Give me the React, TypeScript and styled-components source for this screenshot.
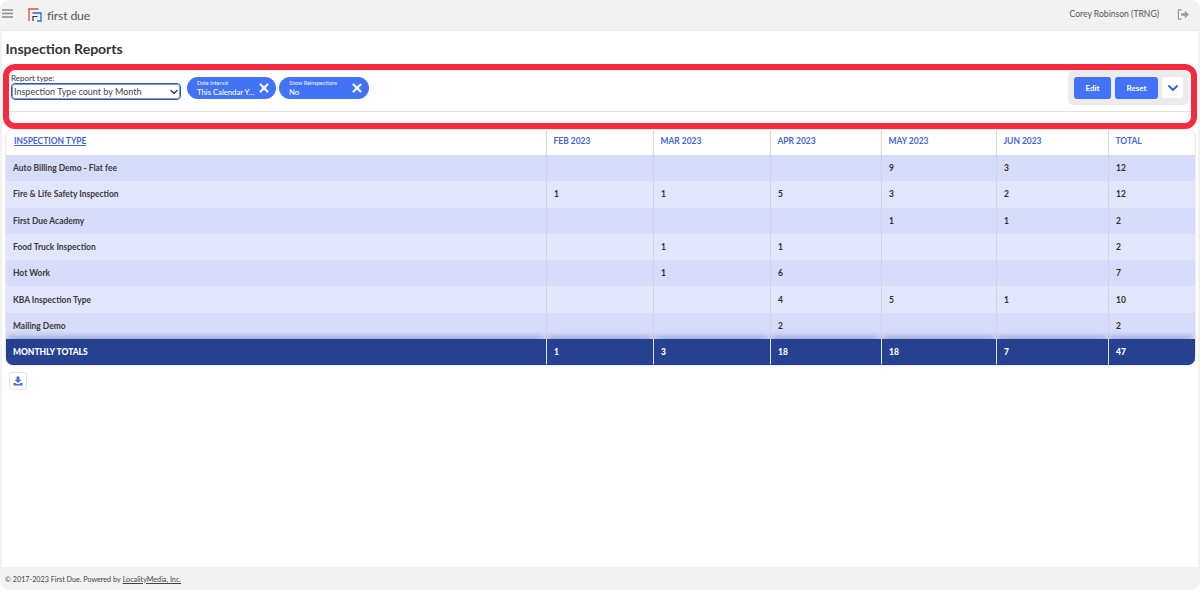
import React from 'react';
import styled, { createGlobalStyle } from 'styled-components';
import { ChevronDown, X } from 'lucide-react';

const GlobalStyle = createGlobalStyle`
  html, body {
    margin: 0;
    padding: 0;
    background: #fff;
    font-family: Lato, 'Liberation Sans', sans-serif;
    color: #333;
  }
`;
const Page = styled.div`
  position: relative;
  width: 1200px;
  height: 590px;
  box-sizing: border-box;
  display: flex;
  flex-direction: column;
  background: #f2f2f2;
  border-radius: 9px;
  padding: 0 2px;
  overflow: hidden;
`;
const TopBar = styled.div`
  height: 31px;
  flex: none;
  display: flex;
  align-items: center;
  padding: 0 9px 0 0;
  border-bottom: 1px solid #e8e8e8;
  box-sizing: border-box;
`;
const MenuIcon = styled.svg`
  width: 11px;
  height: 9px;
  margin-bottom: 3px;
`;
const Logo = styled.svg`
  width: 14px;
  height: 14px;
  margin-left: 15px;
`;
const Brand = styled.span`
  font-size: 12.3px;
  color: #555;
  margin-left: 5px;
  letter-spacing: -0.2px;
`;
const UserName = styled.span`
  margin-left: auto;
  font-size: 8.6px;
  color: #555;
  margin-right: 18px;
  margin-bottom: 2px;
`;
const LogoutIcon = styled.svg`
  width: 12px;
  height: 11px;
  margin-bottom: 2px;
`;
const Main = styled.div`
  flex: 1;
  background: #fff;
  padding: 0 3px 0 4px;
  display: flex;
  flex-direction: column;
`;
const Title = styled.h1`
  margin: 9px 0 0 -0.5px;
  height: 27px;
  font-size: 14px;
  line-height: 17px;
  font-weight: 700;
  color: #333;
`;
const FilterPanel = styled.div`
  height: 45px;
  box-sizing: border-box;
  display: flex;
  align-items: flex-start;
  padding: 7px 6px 0 5px;
  border-bottom: 1px solid #e2e2e2;
  margin-bottom: 18px;
`;
const ReportField = styled.div`
  width: 170px;
  display: flex;
  flex-direction: column;
`;
const FieldLabel = styled.label`
  font-size: 8px;
  line-height: 9px;
  color: #333;
`;
const FakeSelect = styled.div`
  height: 17px;
  box-sizing: border-box;
  display: flex;
  align-items: center;
  justify-content: space-between;
  border: 1px solid #2f55a4;
  outline: 1px solid #7e9fd8;
  outline-offset: -2px;
  border-radius: 4px;
  padding: 0 0 0 2px;
  font-size: 9px;
  color: #444;
  background: #fff;
`;
const Chips = styled.div`
  display: flex;
  gap: 3px;
  margin-left: 6px;
  margin-top: 3px;
`;
const Chip = styled.div<{ $width: number }>`
  width: ${(p) => p.$width}px;
  height: 22px;
  box-sizing: border-box;
  border-radius: 11px;
  background: #4272f5;
  color: #fff;
  padding: 0 5px 0 10px;
  display: flex;
  align-items: center;
  justify-content: space-between;
`;
const ChipText = styled.div`
  display: flex;
  flex-direction: column;
`;
const ChipLabel = styled.span`
  font-size: 5.5px;
  line-height: 7px;
  opacity: 0.95;
`;
const ChipValue = styled.span`
  font-size: 7.7px;
  line-height: 10px;
  font-weight: 500;
`;
const ActionGroup = styled.div`
  margin-left: auto;
  margin-top: -3px;
  height: 34px;
  box-sizing: border-box;
  background: #ececec;
  border-radius: 5px;
  padding: 6px;
  display: flex;
  gap: 4px;
`;
const ActionButton = styled.div<{ $width: number }>`
  width: ${(p) => p.$width}px;
  height: 22px;
  border-radius: 3px;
  background: #4272f5;
  color: #fff;
  font-size: 8px;
  font-weight: 700;
  display: flex;
  align-items: center;
  justify-content: center;
`;
const ToggleButton = styled.div`
  width: 21px;
  height: 21px;
  border-radius: 3px;
  background: #fff;
  color: #2f62e8;
  display: flex;
  align-items: center;
  justify-content: center;
`;
const Report = styled.table`
  width: 1189px;
  flex: none;
  border-collapse: separate;
  border-spacing: 0;
  table-layout: fixed;
  font-size: 8.45px;
  border-radius: 7px;
  box-shadow: 0 0 2px rgba(0, 0, 0, 0.25);
`;
const HeadCell = styled.th`
  height: 25px;
  padding: 0 7px 3px 6.5px;
  box-sizing: border-box;
  text-align: left;
  font-weight: 700;
  color: #3f66d8;
  background: #fff;
  border-left: 1px solid #dcdcdc;
  box-shadow: 0 1px 1px rgba(0, 0, 0, 0.15);
  &:first-child {
    border-left: none;
    border-top-left-radius: 7px;
    padding-left: 8px;
  }
  &:last-child {
    border-top-right-radius: 7px;
  }
`;
const SortLink = styled.a`
  color: #3f66d8;
  text-decoration: underline;
`;
const BodyRow = styled.tr<{ $odd: boolean }>`
  background: ${(p) => (p.$odd ? '#d6dcfa' : '#e1e6fc')};
`;
const BodyCell = styled.td`
  height: 26.3px;
  box-sizing: border-box;
  padding: 0 7px;
  color: #2d2d2d;
  font-weight: 700;
  border-left: 1px solid #d0d3e6;
  &:first-child {
    border-left: none;
  }
`;
const NameCell = styled(BodyCell)`
  color: #3a3a3a;
`;
const TotalCell = styled.td`
  height: 26px;
  box-sizing: border-box;
  padding: 0 7px;
  background: #26418f;
  color: #fff;
  font-weight: 900;
  border-left: 1px solid #dfe3ee;
  border-bottom: 1px solid #1b3a98;
  box-shadow: 0 -5px 5px -2px rgba(38, 65, 143, 0.3);
  &:first-child {
    border-left: none;
    border-bottom-left-radius: 7px;
  }
  &:last-child {
    border-bottom-right-radius: 7px;
  }
`;
const DownloadButton = styled.div`
  width: 18px;
  height: 18px;
  box-sizing: border-box;
  margin: 7px 0 0 3px;
  border-radius: 3px;
  border: 1px solid #e4e4e4;
  display: flex;
  align-items: center;
  justify-content: center;
`;
const Footer = styled.div`
  height: 23px;
  flex: none;
  padding: 1px 0 0 3px;
  box-sizing: border-box;
  display: flex;
  align-items: center;
  font-size: 7.2px;
  color: #444;
`;
const FooterLink = styled.a`
  color: inherit;
  text-decoration: underline;
  margin-left: 2px;
`;
const Callout = styled.div`
  position: absolute;
  left: 3px;
  top: 64px;
  width: 1194px;
  height: 65px;
  box-sizing: border-box;
  border: 6px solid #f92a3f;
  border-radius: 12px;
  pointer-events: none;
`;

const months = ['FEB 2023', 'MAR 2023', 'APR 2023', 'MAY 2023', 'JUN 2023', 'TOTAL'];
const widths = [540, 107, 117, 111, 115, 112, 87];
const rows: [string, ...string[]][] = [
  ['Auto Billing Demo - Flat fee', '', '', '', '9', '3', '12'],
  ['Fire & Life Safety Inspection', '1', '1', '5', '3', '2', '12'],
  ['First Due Academy', '', '', '', '1', '1', '2'],
  ['Food Truck Inspection', '', '1', '1', '', '', '2'],
  ['Hot Work', '', '1', '6', '', '', '7'],
  ['KBA Inspection Type', '', '', '4', '5', '1', '10'],
  ['Mailing Demo', '', '', '2', '', '', '2'],
];
const totals = ['MONTHLY TOTALS', '1', '3', '18', '18', '7', '47'];

export default function App() {
  return (
    <Page>
      <GlobalStyle />
      <TopBar>
        <MenuIcon viewBox="0 0 11 9">
          <path d="M0 1h11M0 4.5h11M0 8h11" stroke="#8a8a8a" strokeWidth="1.3" />
        </MenuIcon>
        <Logo viewBox="0 0 14 14">
          <path d="M1 13V1h9.5" fill="none" stroke="#f0413f" strokeWidth="1.3" />
          <path d="M4.5 5h8.5v8H9" fill="none" stroke="#2f5fe6" strokeWidth="1.3" />
          <path d="M5 13V8.5h4.5" fill="none" stroke="#333" strokeWidth="1.2" />
        </Logo>
        <Brand>first due</Brand>
        <UserName>Corey Robinson (TRNG)</UserName>
        <LogoutIcon viewBox="0 0 13 12">
          <path d="M5 1H1.5v10H5" fill="none" stroke="#9a9a9a" strokeWidth="1.4" />
          <path d="M4.5 4.6h4V2l4.5 4-4.5 4V7.4h-4z" fill="#9a9a9a" />
        </LogoutIcon>
      </TopBar>
      <Main>
        <Title>Inspection Reports</Title>
        <FilterPanel>
          <ReportField>
            <FieldLabel>Report type:</FieldLabel>
            <FakeSelect>
              Inspection Type count by Month
              <ChevronDown size={12} strokeWidth={2.5} color="#333" />
            </FakeSelect>
          </ReportField>
          <Chips>
            <Chip $width={89}>
              <ChipText>
                <ChipLabel>Date Interval</ChipLabel>
                <ChipValue>This Calendar Y...</ChipValue>
              </ChipText>
              <X size={14} strokeWidth={3.6} />
            </Chip>
            <Chip $width={90}>
              <ChipText>
                <ChipLabel>Show Reinspections</ChipLabel>
                <ChipValue>No</ChipValue>
              </ChipText>
              <X size={14} strokeWidth={3.6} />
            </Chip>
          </Chips>
          <ActionGroup>
            <ActionButton $width={37}>Edit</ActionButton>
            <ActionButton $width={43}>Reset</ActionButton>
            <ToggleButton>
              <ChevronDown size={16} strokeWidth={2.8} />
            </ToggleButton>
          </ActionGroup>
        </FilterPanel>
        <Report>
          <colgroup>
            {widths.map((w, i) => (
              <col key={i} width={w} />
            ))}
          </colgroup>
          <thead>
            <tr>
              <HeadCell>
                <SortLink>INSPECTION TYPE</SortLink>
              </HeadCell>
              {months.map((m) => (
                <HeadCell key={m}>{m}</HeadCell>
              ))}
            </tr>
          </thead>
          <tbody>
            {rows.map((r, i) => (
              <BodyRow key={r[0]} $odd={i % 2 === 0}>
                <NameCell>{r[0]}</NameCell>
                {r.slice(1).map((v, j) => (
                  <BodyCell key={j}>{v}</BodyCell>
                ))}
              </BodyRow>
            ))}
            <tr>
              {totals.map((t, i) => (
                <TotalCell key={i}>{t}</TotalCell>
              ))}
            </tr>
          </tbody>
        </Report>
        <DownloadButton>
          <svg width="10" height="10" viewBox="0 0 10 10">
            <path d="M3.6 0.5h2.8v3.2h2L5 7 1.6 3.7h2z" fill="#3f6ff0" />
            <path d="M0.5 7h2l1 1h3l1-1h2v2.5h-9z" fill="#3f6ff0" />
          </svg>
        </DownloadButton>
      </Main>
      <Footer>
        © 2017-2023 First Due. Powered by<FooterLink>LocalityMedia, Inc.</FooterLink>
      </Footer>
      <Callout />
    </Page>
  );
}
